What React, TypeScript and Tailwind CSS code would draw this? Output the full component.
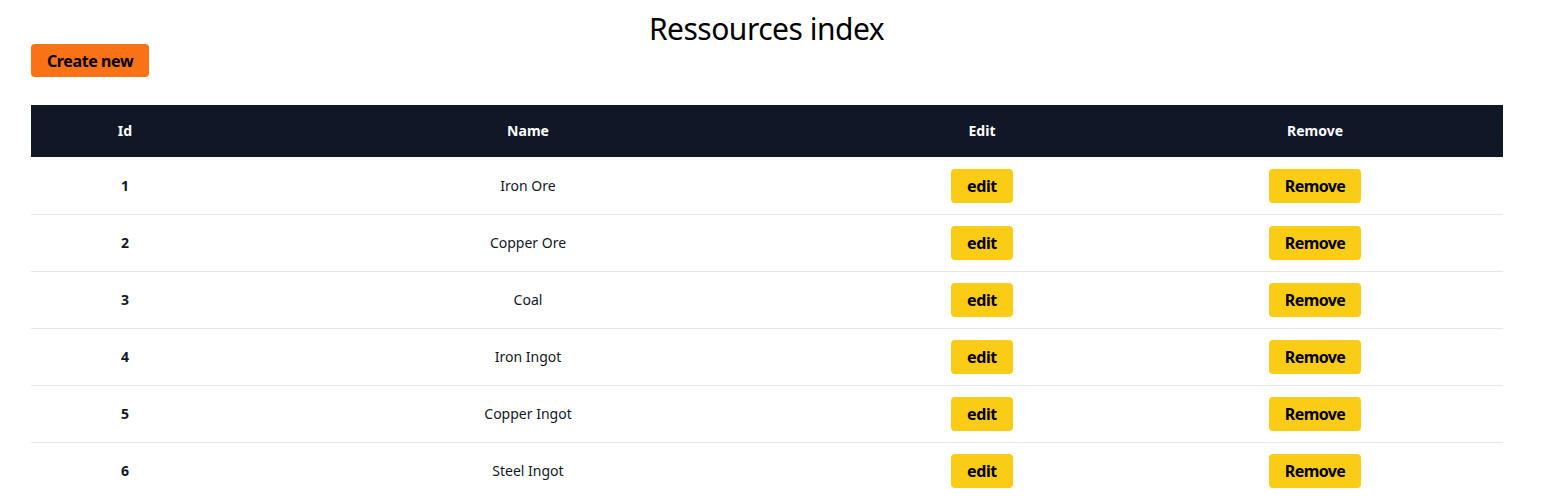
const ressources = [
  { id: 1, name: "Iron Ore" },
  { id: 2, name: "Copper Ore" },
  { id: 3, name: "Coal" },
  { id: 4, name: "Iron Ingot" },
  { id: 5, name: "Copper Ingot" },
  { id: 6, name: "Steel Ingot" },
]

export default function App() {
  return (
    <div className="min-h-screen w-[1533px] bg-white px-[31px] text-[#111827] font-['Noto_Sans',sans-serif]">
      <h1 className="pt-[14px] text-center text-[30px] leading-[30px] tracking-[-0.5px] text-black">Ressources index</h1>
      <button className="h-[33px] rounded bg-[#f97316] px-4 text-base font-bold tracking-[-0.4px] text-black">Create new</button>

      <table className="mt-[28px] w-full table-fixed border-collapse text-sm">
        <thead>
          <tr className="h-[52px] bg-gray-900 text-white">
            <th className="w-[188px] font-bold">Id</th>
            <th className="w-[618px] font-bold">Name</th>
            <th className="w-[290px] font-bold">Edit</th>
            <th className="w-[376px] font-bold">Remove</th>
          </tr>
        </thead>
        <tbody>
          {ressources.map((r) => (
            <tr key={r.id} className="h-[57px] border-b border-gray-200 text-center">
              <td className="pt-px font-bold">{r.id}</td>
              <td className="pt-px">{r.name}</td>
              <td className="pt-px">
                <button className="h-[34px] rounded bg-[#facc15] px-4 text-base font-bold tracking-[-0.4px] text-black">edit</button>
              </td>
              <td className="pt-px">
                <button className="h-[34px] rounded bg-[#facc15] px-4 text-base font-bold tracking-[-0.6px] text-black">Remove</button>
              </td>
            </tr>
          ))}
        </tbody>
      </table>
    </div>
  )
}
